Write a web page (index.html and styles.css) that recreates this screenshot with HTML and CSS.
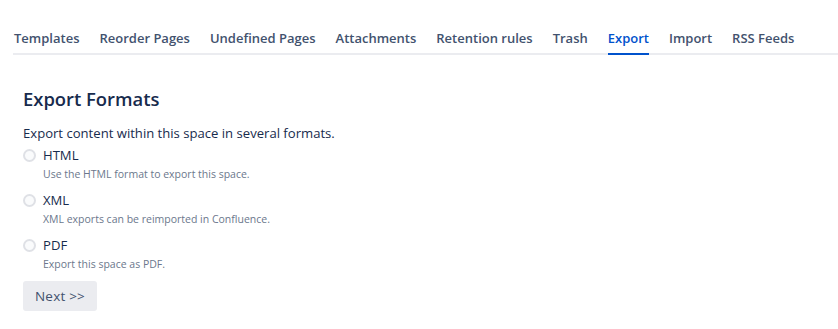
FILE: index.html
```html
<!DOCTYPE html>
<html lang="en">
<head>
<meta charset="utf-8">
<title>Export</title>
<link rel="stylesheet" href="styles.css">
</head>
<body>
<div class="page">
  <nav class="tabs">
    <a class="tab">Templates</a>
    <a class="tab">Reorder Pages</a>
    <a class="tab">Undefined Pages</a>
    <a class="tab">Attachments</a>
    <a class="tab">Retention rules</a>
    <a class="tab">Trash</a>
    <a class="tab active">Export</a>
    <a class="tab">Import</a>
    <a class="tab">RSS Feeds</a>
  </nav>
  <main class="content">
    <h2 class="title">Export Formats</h2>
    <p class="intro">Export content within this space in several formats.</p>
    <div class="options">
      <div class="option">
        <label class="option-label"><span class="radio"></span>HTML</label>
        <div class="desc">Use the HTML format to export this space.</div>
      </div>
      <div class="option">
        <label class="option-label"><span class="radio"></span>XML</label>
        <div class="desc">XML exports can be reimported in Confluence.</div>
      </div>
      <div class="option">
        <label class="option-label"><span class="radio"></span>PDF</label>
        <div class="desc">Export this space as PDF.</div>
      </div>
    </div>
    <button class="btn">Next &gt;&gt;</button>
  </main>
</div>
</body>
</html>
```

FILE: styles.css
```css
html, body {
  margin: 0;
  padding: 0;
  background: #ffffff;
}
body {
  font-family: "Open Sans", "Noto Sans", sans-serif;
  color: #172B4D;
  font-size: 13.1px;
}
.page {
  padding: 28px 0 0 13px;
}
.tabs {
  display: flex;
  gap: 20px;
  border-bottom: 2px solid #EBECF0;
  padding-left: 1px;
}
.tab {
  display: block;
  flex: none;
  white-space: nowrap;
  font-size: 13px;
  font-weight: 600;
  line-height: 20px;
  color: #42526E;
  padding-bottom: 5px;
  border-bottom: 2px solid transparent;
  margin-bottom: -2px;
}
.tab.active {
  color: #0052CC;
  border-bottom-color: #0052CC;
}
.content {
  padding-left: 10px;
}
.title {
  margin: 0;
  padding-top: 32px;
  font-size: 18.4px;
  font-weight: 600;
  line-height: 24px;
  color: #172B4D;
}
.intro {
  margin: 12px 0 0;
  line-height: 20px;
}
.options {
  margin-top: 2px;
}
.option {
  margin-bottom: 7px;
}
.option-label {
  display: flex;
  align-items: center;
  gap: 7px;
  line-height: 20px;
  font-size: 13.1px;
  color: #172B4D;
}
.radio {
  box-sizing: border-box;
  width: 13px;
  height: 13px;
  border-radius: 50%;
  border: 2px solid #DFE1E6;
  background: #FAFBFC;
  flex: none;
}
.desc {
  padding-left: 20px;
  font-size: 10.5px;
  line-height: 18px;
  color: #6B778C;
}
.btn {
  display: block;
  margin-top: 8px;
  font-family: inherit;
  font-size: 13.5px;
  color: #42526E;
  background: #EBECF0;
  border: none;
  border-radius: 3px;
  height: 30px;
  padding: 0 12px;
  line-height: 30px;
  letter-spacing: 0.2px;
}
```
